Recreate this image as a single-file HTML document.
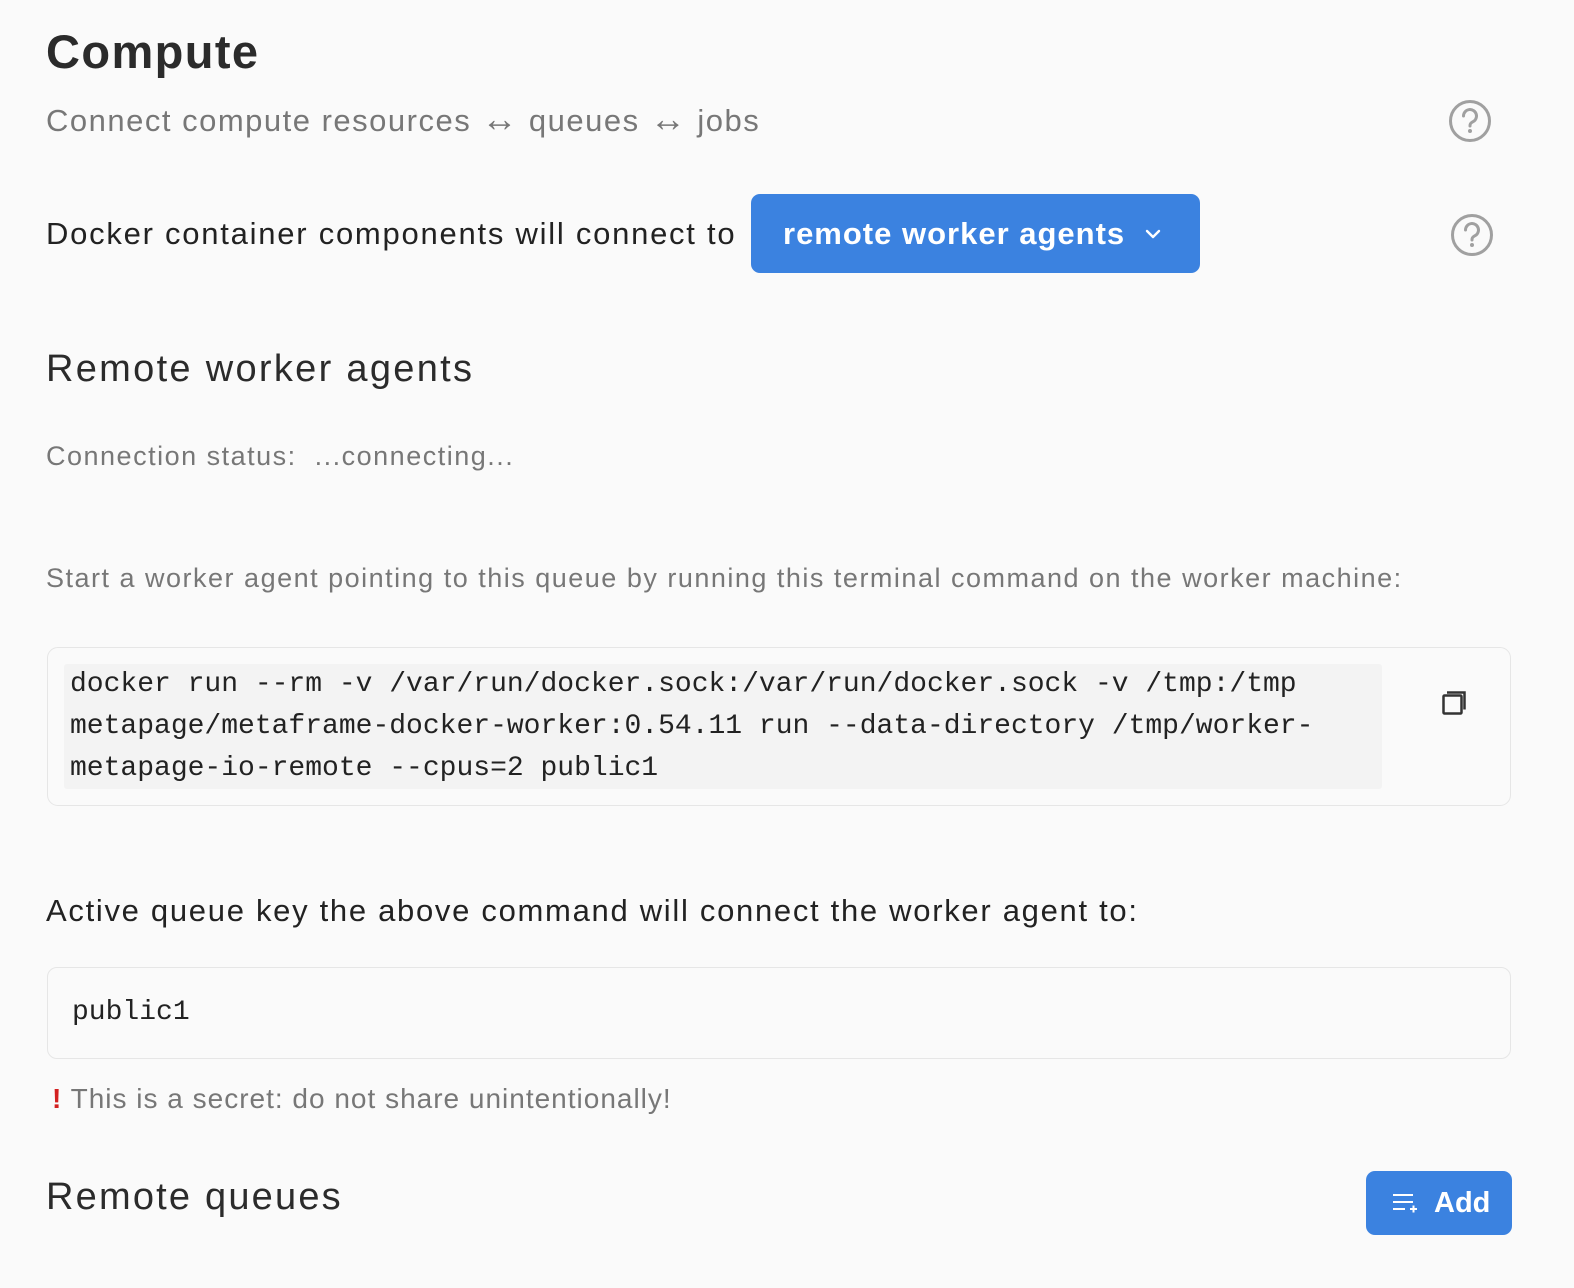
<!DOCTYPE html>
<html><head><style>
body{margin:0;background:#fafafa;font-family:"Liberation Sans",sans-serif;width:1574px;height:1288px;overflow:hidden;position:relative;color:#2a2a2a}
.a{position:absolute;white-space:nowrap}
.mono{font-family:"Liberation Mono",monospace}
</style></head><body>
<div class="a" style="left:46px;top:24px;font-size:47px;font-weight:bold;color:#2b2b2b;letter-spacing:1.4px">Compute</div>
<div class="a" style="left:46px;top:103px;font-size:31px;color:#777;letter-spacing:1.5px">Connect compute resources <span style="font-size:36px;line-height:20px">↔</span> queues <span style="font-size:36px;line-height:20px">↔</span> jobs</div>
<svg class="a" style="left:1448px;top:99px" width="44" height="44" viewBox="0 0 44 44"><circle cx="22" cy="22" r="19.5" fill="none" stroke="#a0a0a0" stroke-width="3"/><path d="M15.5 17a6.5 6.5 0 1 1 9 6c-2 1-2.5 2-2.5 4" fill="none" stroke="#a0a0a0" stroke-width="3" stroke-linecap="round"/><circle cx="22" cy="32" r="2" fill="#a0a0a0"/></svg>
<div class="a" style="left:46px;top:216px;font-size:31px;color:#222;letter-spacing:1.75px">Docker container components will connect to</div>
<div class="a" style="left:751px;top:194px;width:449px;height:79px;background:#3b82e0;border-radius:9px;color:#fff;font-size:31px;font-weight:bold;line-height:79px;text-indent:32px;letter-spacing:1px">remote worker agents<svg style="position:absolute;left:393px;top:34px" width="18" height="12" viewBox="0 0 18 12"><path d="M3 3l6 6 6-6" fill="none" stroke="#fff" stroke-width="2.4" stroke-linecap="round" stroke-linejoin="round"/></svg></div>
<svg class="a" style="left:1450px;top:213px" width="44" height="44" viewBox="0 0 44 44"><circle cx="22" cy="22" r="19.5" fill="none" stroke="#a0a0a0" stroke-width="3"/><path d="M15.5 17a6.5 6.5 0 1 1 9 6c-2 1-2.5 2-2.5 4" fill="none" stroke="#a0a0a0" stroke-width="3" stroke-linecap="round"/><circle cx="22" cy="32" r="2" fill="#a0a0a0"/></svg>
<div class="a" style="left:46px;top:348px;font-size:38px;color:#2b2b2b;letter-spacing:2.3px">Remote worker agents</div>
<div class="a" style="left:46px;top:441px;font-size:27px;color:#777;letter-spacing:1.5px">Connection status:&nbsp; ...connecting...</div>
<div class="a" style="left:46px;top:563px;font-size:27px;color:#777;letter-spacing:1.5px">Start a worker agent pointing to this queue by running this terminal command on the worker machine:</div>
<div class="a" style="left:47px;top:647px;width:1462px;height:157px;border:1.5px solid #e6e6e6;border-radius:11px"></div>
<div class="a mono" style="left:64px;top:664px;width:1312px;height:125px;background:#f3f3f3;border-radius:3px;font-size:28px;line-height:42px;padding-left:6px;color:#222">docker run --rm -v /var/run/docker.sock:/var/run/docker.sock -v /tmp:/tmp<br>metapage/metaframe-docker-worker:0.54.11 run --data-directory /tmp/worker-<br>metapage-io-remote --cpus=2 public1</div>
<svg class="a" style="left:1440px;top:690px" width="28" height="28" viewBox="0 0 28 28"><rect x="3.5" y="5.5" width="18" height="18" rx="1" fill="none" stroke="#333" stroke-width="2.5"/><path d="M7 2.5h17.5v17" fill="none" stroke="#333" stroke-width="2.5"/></svg>
<div class="a" style="left:46px;top:893px;font-size:31px;color:#222;letter-spacing:1.7px">Active queue key the above command will connect the worker agent to:</div>
<div class="a mono" style="left:47px;top:967px;width:1462px;height:90px;border:1.5px solid #e6e6e6;border-radius:10px;font-size:28px;line-height:90px;text-indent:24px;color:#222">public1</div>
<div class="a" style="left:52px;top:1083px;font-size:28px;color:#777;letter-spacing:1px"><span style="color:#d32020;font-weight:bold">!</span> This is a secret: do not share unintentionally!</div>
<div class="a" style="left:46px;top:1176px;font-size:38px;color:#2b2b2b;letter-spacing:2.2px">Remote queues</div>
<div class="a" style="left:1366px;top:1171px;width:146px;height:64px;background:#3b82e0;border-radius:9px;color:#fff;font-size:29px;font-weight:bold;line-height:64px"><svg style="position:absolute;left:26px;top:21px" width="26" height="24" viewBox="0 0 26 24"><path d="M1 3h20M1 10h20M1 17h12M18 17h7M21.5 13.5v7" fill="none" stroke="#fff" stroke-width="2"/></svg><span style="position:absolute;left:68px">Add</span></div>
</body></html>
